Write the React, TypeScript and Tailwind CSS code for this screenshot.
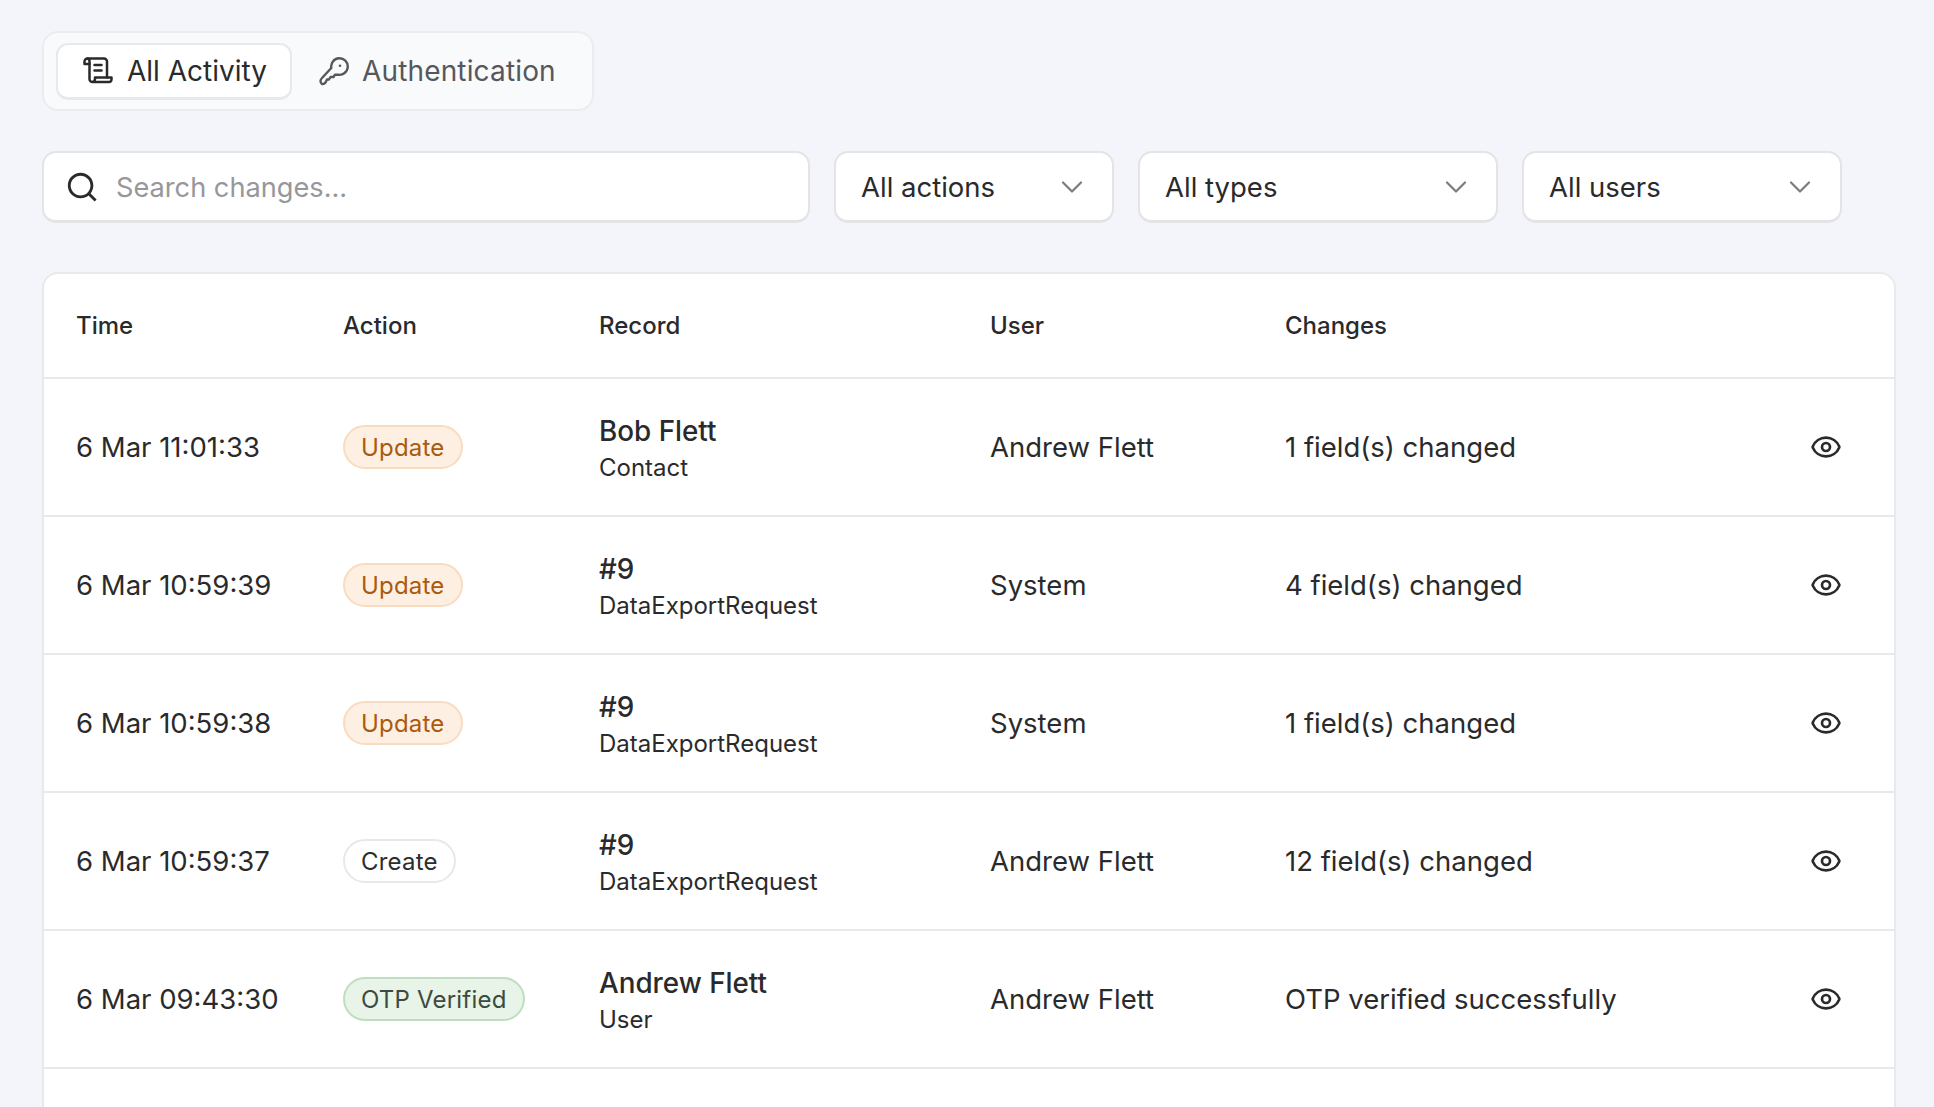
import { ChevronDown, Eye } from "lucide-react";
import { RiSearchLine } from "react-icons/ri";

type Tone = "update" | "create" | "otp";

const rows: {
  time: string;
  action: string;
  tone: Tone;
  record: string;
  type: string;
  user: string;
  changes: string;
}[] = [
  { time: "6 Mar 11:01:33", action: "Update", tone: "update", record: "Bob Flett", type: "Contact", user: "Andrew Flett", changes: "1 field(s) changed" },
  { time: "6 Mar 10:59:39", action: "Update", tone: "update", record: "#9", type: "DataExportRequest", user: "System", changes: "4 field(s) changed" },
  { time: "6 Mar 10:59:38", action: "Update", tone: "update", record: "#9", type: "DataExportRequest", user: "System", changes: "1 field(s) changed" },
  { time: "6 Mar 10:59:37", action: "Create", tone: "create", record: "#9", type: "DataExportRequest", user: "Andrew Flett", changes: "12 field(s) changed" },
  { time: "6 Mar 09:43:30", action: "OTP Verified", tone: "otp", record: "Andrew Flett", type: "User", user: "Andrew Flett", changes: "OTP verified successfully" },
];

const badgeTones: Record<Tone, string> = {
  update: "bg-[#fdefe2] border-[#f9dcc0] text-[#ab5a0c]",
  create: "bg-white border-[#e8e8e8] text-[#2d2d2d]",
  otp: "bg-[#e7f4e7] border-[#bfdec0] text-[#3c4a3f]",
};

function ScrollIcon() {
  return (
    <svg width="30" height="27" viewBox="0 0 30 27" fill="none" stroke="currentColor" strokeWidth="2.5" strokeLinecap="round" strokeLinejoin="round">
      <path d="M4.5 1.5H21a3 3 0 0 1 3 3V20.5" />
      <path d="M4.5 1.5a3 3 0 0 0-3 3V7H6.5V4.5a3 3 0 0 0-2-3" />
      <path d="M6.5 7V22a3 3 0 0 0 3 3H26a2.5 2.5 0 0 0 2.5-2.5V20.5H12V22a3 3 0 0 1-3 3" />
      <path d="M11.5 8H18.5M11.5 13.5H18.5" />
    </svg>
  );
}

function KeyIcon() {
  return (
    <svg width="30" height="29" viewBox="0 0 30 29" fill="none" stroke="currentColor" strokeWidth="2.4" strokeLinecap="round" strokeLinejoin="round">
      <path d="M12.3 11A8.3 8.3 0 1 1 19 17.7H16L14.5 20H11.5L10 22.5H8L6.5 25.5Q5 27.5 3 27Q1.5 26 1.5 24Q1.5 22.5 3 21Z" />
      <circle cx="21" cy="8.7" r="1.3" fill="currentColor" stroke="none" />
    </svg>
  );
}

function Select({ label, width }: { label: string; width: string }) {
  return (
    <div className={`${width} h-[72px] flex items-center justify-between pl-[25px] pr-[22px] bg-white rounded-[14px] border-2 border-[#e4e4e7] border-b-[3px] text-[27.5px]`}>
      <span className="pt-[2px]">{label}</span>
      <ChevronDown size={36} strokeWidth={1.5} className="text-[#7c7c7c]" />
    </div>
  );
}

export default function App() {
  return (
    <div className="h-[1107px] overflow-hidden flex flex-col bg-[#f4f5fa] pt-[31px] pl-[42px] pr-[38px] font-['Inter',sans-serif] text-[#2a2a2c]">
      <div className="w-[552px] h-[80px] flex items-center gap-[10px] px-3 bg-[#f9fafc] border-2 border-[#ececf0] rounded-[16px]">
        <div className="w-[236px] h-[57px] flex items-center gap-[14px] pl-[25px] bg-white rounded-[12px] border-2 border-[#e9e9ec] border-b-[3px] text-[28px]">
          <ScrollIcon />
          <span>All Activity</span>
        </div>
        <div className="flex items-center gap-[13px] pl-[17px] text-[28px] tracking-[0.15px] text-[#57575b]">
          <KeyIcon />
          <span>Authentication</span>
        </div>
      </div>

      <div className="mt-[40px] flex gap-[24px]">
        <div className="w-[768px] h-[72px] flex items-center gap-[17px] pl-[21px] bg-white rounded-[14px] border-2 border-[#e4e4e7] border-b-[3px] text-[27.2px]">
          <RiSearchLine size={34} />
          <span className="pt-[3px] text-[#97979b]">Search changes...</span>
        </div>
        <Select label="All actions" width="w-[280px]" />
        <Select label="All types" width="w-[360px]" />
        <Select label="All users" width="w-[320px]" />
      </div>

      <div className="mt-[49px] flex-1 bg-white rounded-t-[16px] border-2 border-b-0 border-[#e9e9ec]">
        <table className="w-full table-fixed border-collapse text-[27.5px]">
          <colgroup>
            <col className="w-[299px]" />
            <col className="w-[256px]" />
            <col className="w-[391px]" />
            <col className="w-[295px]" />
            <col />
            <col className="w-[130px]" />
          </colgroup>
          <thead>
            <tr className="h-[104px] border-b-2 border-[#e9e9ec] text-left text-[24px]">
              <th className="pl-8 font-medium">Time</th>
              <th className="font-medium">Action</th>
              <th className="font-medium">Record</th>
              <th className="font-medium">User</th>
              <th className="font-medium">Changes</th>
              <th />
            </tr>
          </thead>
          <tbody>
            {rows.map((row, i) => (
              <tr key={i} className="h-[138px] border-b-2 border-[#e9e9ec]">
                <td className="pl-8 pt-[2px]">{row.time}</td>
                <td>
                  <span className={`inline-flex items-center h-[44px] px-[16px] pt-[2px] rounded-full border-2 text-[24px] tracking-[0.2px] ${badgeTones[row.tone]}`}>
                    {row.action}
                  </span>
                </td>
                <td>
                  <div className="text-[27.8px] font-medium leading-[40px]">{row.record}</div>
                  <div className="mt-[1px] text-[24px] leading-[32px]">{row.type}</div>
                </td>
                <td className="pt-[2px]">{row.user}</td>
                <td className="pt-[2px]">{row.changes}</td>
                <td>
                  <div className="flex justify-end pr-[52px]">
                    <Eye size={32} />
                  </div>
                </td>
              </tr>
            ))}
          </tbody>
        </table>
      </div>
    </div>
  );
}
